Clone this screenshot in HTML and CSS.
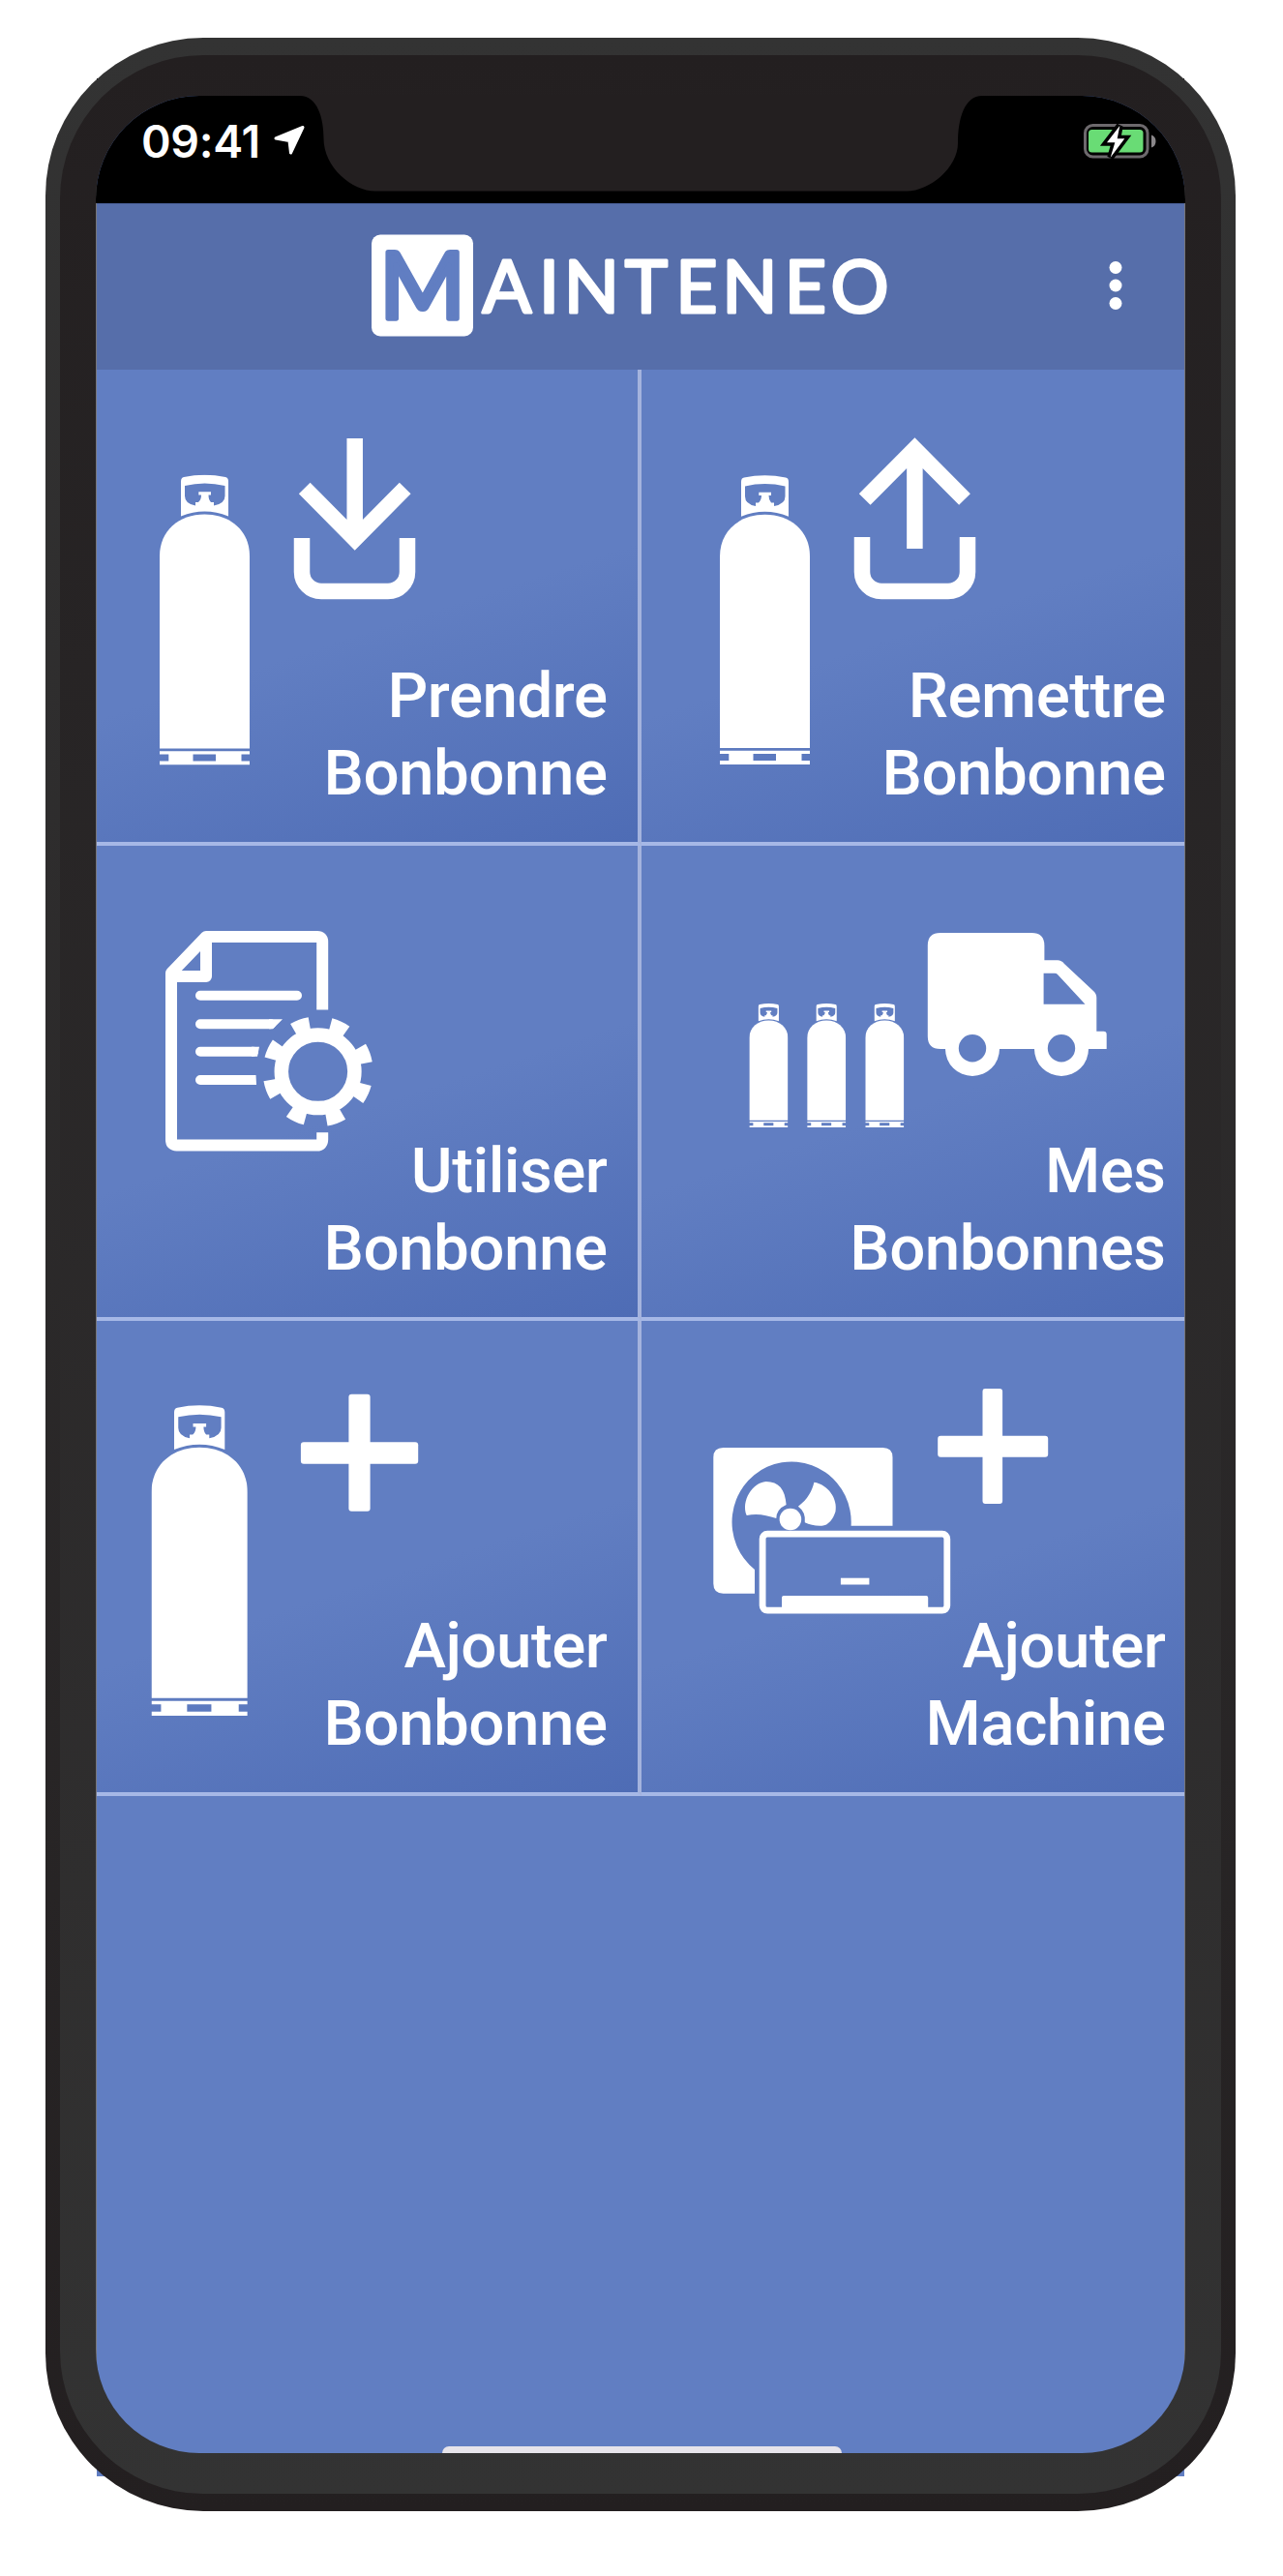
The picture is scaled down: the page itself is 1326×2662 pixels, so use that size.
FILE: index.html
```html
<!DOCTYPE html>
<html lang="fr">
<head>
    <meta charset="UTF-8">
    <meta name="viewport" content="width=device-width, initial-scale=1.0">
    <title>Mainteneo</title>
    <link rel="stylesheet" href="styles.css">
</head>
<body>
    <!-- Shared shapes -->
    <svg class="defs" width="0" height="0">
        <symbol id="bottle" viewBox="0 0 93 300" preserveAspectRatio="none">
            <path fill-rule="evenodd" d="M22 7Q22 3 25 2.500Q46.500-2 68 2.500Q71 3 71 7V43Q46.500 33 22 43ZM26 11.500V22Q26 30 37 32V28.500H40Q43 26 43 21H40.300V17.700H53V21H50.500Q50.500 26 53 28.500H56V32Q67.500 30 67.500 22V11.500Q46.500 6.500 26 11.500Z"/>
            <path d="M0 283V84C0 58 20 41 46.500 41S93 58 93 84V283Z"/>
            <path d="M0 285.700H93V289H84.500V296H93V300H0V296H9.300V289H0ZM34.500 289V296H58V289Z" fill-rule="evenodd"/>
        </symbol>
    </svg>

    <div class="device">
        <div class="bezel">
            <div class="screen">
                <div class="status-bar">
                    <span class="time">09:41</span>
                    <svg class="location" width="34" height="34" viewBox="0 0 34 34">
                        <path d="M3 15L31 3.500L18.500 30L17 17.500Z"/>
                    </svg>
                    <svg class="battery" width="78" height="40" viewBox="0 0 78 40">
                        <rect class="battery-shell" x="2.500" y="3.500" width="64.500" height="32.500" rx="8"/>
                        <path class="battery-nub" d="M71 13.500Q75.500 15 75.500 20T71 26.500Z"/>
                        <rect class="battery-level" x="6" y="8" width="56.500" height="23.500" rx="3.500"/>
                        <path class="bolt-gap" d="M38.300 4L25 21.300H33.300L28.700 36.700L43.300 17.300H35.700Z"/>
                        <path class="bolt" d="M38.300 4L25 21.300H33.300L28.700 36.700L43.300 17.300H35.700Z"/>
                    </svg>
                </div>

                <div class="app-header">
                    <svg class="logo" width="540" height="106" viewBox="0 0 540 106">
                        <rect class="logo-box" x="0" y="0.500" width="105" height="105" rx="9"/>
                        <text class="logo-initial" x="52.500" y="87" text-anchor="middle">M</text>
                        <text class="logo-name" text-anchor="middle" y="80.500" x="140 183.500 227.300 284 336 391 448.500 504.500">AINTENEO</text>
                    </svg>
                    <svg class="menu-dots" width="14" height="52" viewBox="0 0 14 52">
                        <circle cx="7" cy="7.500" r="6.500"/>
                        <circle cx="7" cy="26" r="6.500"/>
                        <circle cx="7" cy="44.500" r="6.500"/>
                    </svg>
                </div>

                <div class="tiles">
                    <div class="tile">
                        <svg class="tile-icon" width="559" height="488">
                            <use href="#bottle" x="65" y="108.500" width="93" height="300"/>
                            <path class="line arrow" d="M266.700 71V170M214.700 122.500L266.700 175L318.700 122.500"/>
                            <path class="line arrow" d="M212 174V209A20 20 0 0 0 232 229H301A20 20 0 0 0 321 209V174"/>
                        </svg>
                        <div class="tile-label">Prendre<br>Bonbonne</div>
                    </div>

                    <div class="tile">
                        <svg class="tile-icon" width="561" height="488">
                            <use href="#bottle" x="81" y="109" width="93" height="299"/>
                            <path class="line arrow" d="M282.400 185V87M230.700 134L282.400 82L334 134"/>
                            <path class="line arrow" d="M228 173V209A20 20 0 0 0 248 229H317A20 20 0 0 0 337 209V173"/>
                        </svg>
                        <div class="tile-label">Remettre<br>Bonbonne</div>
                    </div>

                    <div class="tile">
                        <svg class="tile-icon" width="559" height="487">
                            <path class="line page" d="M233.200 169.500V99Q233.200 94 228 94H113L77 131.500V304Q77 309.500 82.500 309.500H227.500Q233.200 309.500 233.200 303.500V296.300"/>
                            <path class="line page" d="M113 94V135H77"/>
                            <path class="line text-line" d="M107 154.700H207M107 184.300H180M107 212.700H162M107 242H159"/>
                            <path d="M178 179.300H192L182 189.300H178ZM160 207.700H168L166 217.700H160ZM158 237H164.500L165 247H158Z"/>
                            <circle class="line" cx="228.600" cy="233.300" r="37.800" stroke-width="14.500"/>
                            <circle class="line" cx="228.600" cy="233.300" r="50.500" stroke-width="13" pathLength="360" stroke-dasharray="20 25" transform="rotate(-30 228.600 233.300)"/>
                        </svg>
                        <div class="tile-label">Utiliser<br>Bonbonne</div>
                    </div>

                    <div class="tile">
                        <svg class="tile-icon" width="561" height="487">
                            <use href="#bottle" x="111.400" y="163" width="40" height="128"/>
                            <use href="#bottle" x="171.200" y="163" width="40" height="128"/>
                            <use href="#bottle" x="231.300" y="163" width="40" height="128"/>
                            <path fill-rule="evenodd" d="M309 90H403Q416.400 90 416.400 103V118.300H430Q434 118.300 437 122L467 150Q470.300 153 470.300 157V191.700H477.500Q480.700 191.700 480.700 195V210H462A28 28 0 0 1 406 210H370A28 28 0 0 1 314 210H309Q295.800 210 295.800 197V103Q295.800 90 309 90ZM415.600 131.700V163.700H458.500L430 133Q429 131.700 427 131.700ZM327.800 209.300A14.200 14.200 0 1 0 356.200 209.300A14.200 14.200 0 1 0 327.800 209.300ZM419.800 209.300A14.200 14.200 0 1 0 448.200 209.300A14.200 14.200 0 1 0 419.800 209.300Z"/>
                        </svg>
                        <div class="tile-label">Mes<br>Bonbonnes</div>
                    </div>

                    <div class="tile">
                        <svg class="tile-icon" width="559" height="487">
                            <use href="#bottle" x="56.500" y="87" width="99.300" height="321"/>
                            <rect x="260.400" y="75.700" width="22.200" height="121" rx="3"/>
                            <rect x="210.900" y="125.300" width="121.300" height="22.400" rx="3"/>
                        </svg>
                        <div class="tile-label">Ajouter<br>Bonbonne</div>
                    </div>

                    <div class="tile">
                        <svg class="tile-icon" width="561" height="487">
                            <rect x="352.500" y="70" width="20.600" height="119" rx="3"/>
                            <rect x="306.200" y="118.700" width="114" height="22" rx="3"/>
                            <!-- outdoor unit -->
                            <path d="M84.500 131H249.500Q259.500 131 259.500 141V211.700H216.600A61.600 62.500 0 1 0 117 257V281.700H84.500Q74.300 281.700 74.300 271.500V141Q74.300 131 84.500 131Z"/>
                            <path d="M149.600 190C148.500 174 142 166 128.600 166C115 167 102.500 186 108.700 201C119 198.500 129 200.500 139.300 204Q139.500 194.500 149.600 190Z"/>
                            <path d="M178.400 166.700C193 169 203 184 200.500 197C198.500 204 193 212 186 211.700Q176 212 168.800 208.300Q170 197.500 161.900 191.700C172 184 176 176 178.400 166.700Z"/>
                            <circle cx="153.900" cy="205" r="11.300"/>
                            <!-- indoor unit -->
                            <rect class="line" x="125.100" y="220.200" width="190.700" height="79" rx="5" stroke-width="6.800"/>
                            <rect x="145" y="284" width="151.200" height="16" rx="2"/>
                            <rect x="205.900" y="265.700" width="29.500" height="6.800"/>
                        </svg>
                        <div class="tile-label">Ajouter<br>Machine</div>
                    </div>
                </div>

                <div class="home-indicator"></div>
            </div>
        </div>
        <svg class="notch" width="705" height="100" viewBox="0 0 705 100">
            <path d="M0 0V1C18 1 24.500 24 24.500 45C24.500 75 54 99.500 78 99.500H627C651 99.500 680 75 680 50C680 24 687 1 705 1V0Z"/>
        </svg>
    </div>
</body>
</html>
```
FILE: styles.css
```css
* {
    box-sizing: border-box;
}

body {
    margin: 0;
    padding: 39px 0 0 47px;
    background-color: #ffffff;
    color: #ffffff;
    font-family: Roboto, "Liberation Sans", sans-serif;
}

svg {
    display: block;
    fill: #ffffff;
}

.defs {
    position: absolute;
}

/* Phone body */
.device {
    position: relative;
    z-index: 0;
    width: 1230px;
    height: 2556px;
    padding: 18px 15px;
}

/* corners of the app surface that stick out behind the frame */
.device::before {
    content: "";
    position: absolute;
    z-index: -1;
    left: 53px;
    top: 42px;
    width: 1124px;
    height: 2478px;
    background: linear-gradient(#000000 50%, #617ec2 50%);
}

.device::after {
    content: "";
    position: absolute;
    z-index: -1;
    inset: 0;
    border-radius: 163px;
    background: linear-gradient(#333333, #231f20);
}

.bezel {
    height: 100%;
    padding: 42px 37px;
    border-radius: 148px;
    background: linear-gradient(#231f20, #333333);
}

.screen {
    display: flex;
    flex-direction: column;
    height: 2436px;
    padding: 0 1px;
    border-radius: 107px;
    overflow: hidden;
    background: linear-gradient(90deg, #77767a 1px, #617ec2 1px, #617ec2 1125px, #77767a 1125px);
}

.notch {
    position: absolute;
    left: 263px;
    top: 59px;
    fill: #231f20;
}

.status-bar {
    display: flex;
    align-items: flex-start;
    height: 111px;
    margin: 0 -1px;
    padding: 17px 28px 0 47px;
    background-color: #000000;
}

.time {
    width: 136px;
    font-family: Inter, "Liberation Sans", sans-serif;
    font-size: 46.500px;
    font-weight: 600;
    line-height: 60px;
    letter-spacing: -0.300px;
    white-space: nowrap;
}

.location {
    margin-top: 12px;
    stroke: #ffffff;
    stroke-width: 3;
    stroke-linejoin: round;
}

.battery {
    margin: 10px 0 0 auto;
}

.battery-shell {
    fill: none;
    stroke: #6d696d;
    stroke-width: 3;
}

.battery-nub {
    fill: #8a878a;
}

.battery-level {
    fill: #69dc75;
}

.bolt-gap {
    stroke: #000000;
    stroke-width: 7;
}

.app-header {
    display: flex;
    align-items: center;
    height: 172px;
    padding: 0 64px 3px 284px;
    border-top: 1px solid #4b619a;
    background-color: #566eaa;
}

.logo-box {
    fill: #ffffff;
}

.logo-initial {
    fill: #617ec2;
    stroke: #617ec2;
    stroke-width: 5.500;
    stroke-linejoin: round;
    font-family: Lato, sans-serif;
    font-size: 95px;
    font-weight: 400;
}

.logo-name {
    stroke: #ffffff;
    stroke-width: 3;
    stroke-linejoin: round;
    font-family: Lato, sans-serif;
    font-size: 75px;
    font-weight: 400;
}

.menu-dots {
    margin-left: auto;
}

.tiles {
    display: grid;
    grid-template-columns: 563px 561px;
    grid-template-rows: 492px 491px 491px;
}

/* icon and label share the same cell */
.tile {
    display: grid;
    border-bottom: 4px solid #a6b8e6;
    background: linear-gradient(162deg, #617ec2 54%, #4e6cb5 100%);
}

.tile:nth-child(odd) {
    border-right: 4px solid #a4b3dd;
}

.tile-icon,
.tile-label {
    grid-area: 1 / 1;
}

.tile-label {
    align-self: end;
    padding: 0 31.500px 31px 0;
    font-size: 65.500px;
    font-weight: 500;
    line-height: 80px;
    letter-spacing: -0.500px;
    text-align: right;
}

.tile:nth-child(even) .tile-label {
    padding-right: 19.500px;
}

.line {
    fill: none;
    stroke: #ffffff;
}

.arrow {
    stroke-width: 16.500;
}

.page {
    stroke-width: 12;
    stroke-linejoin: round;
}

.text-line {
    stroke-width: 10;
    stroke-linecap: round;
}

.home-indicator {
    width: 413px;
    height: 7px;
    margin: auto auto 0 357px;
    border-radius: 8px 8px 0 0;
    background-color: #e7e4ea;
}
```
